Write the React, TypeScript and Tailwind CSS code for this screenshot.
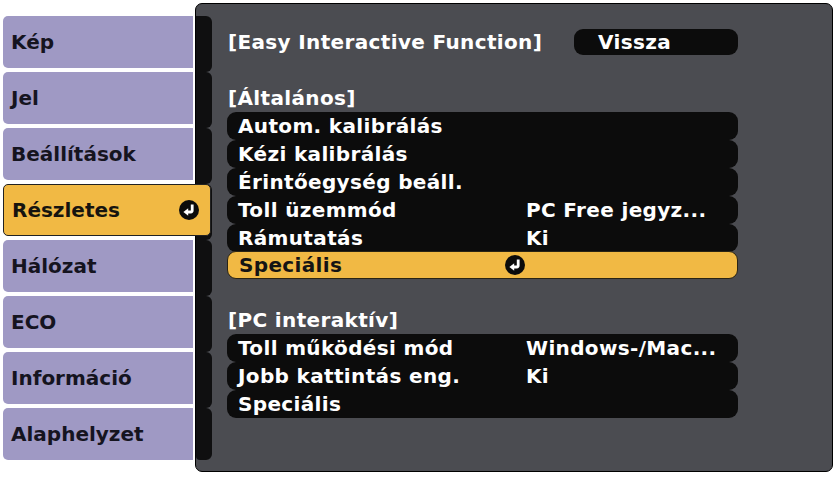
import React from "react";

const TABS = ["Kép", "Jel", "Beállítások", "Részletes", "Hálózat", "ECO", "Információ", "Alaphelyzet"];
const ACTIVE_TAB = "Részletes";

type Row = { label: string; value?: string; selected?: boolean };

const GENERAL: Row[] = [
  { label: "Autom. kalibrálás" },
  { label: "Kézi kalibrálás" },
  { label: "Érintőegység beáll." },
  { label: "Toll üzemmód", value: "PC Free jegyz..." },
  { label: "Rámutatás", value: "Ki" },
  { label: "Speciális", selected: true },
];

const PC_INTERACTIVE: Row[] = [
  { label: "Toll működési mód", value: "Windows-/Mac..." },
  { label: "Jobb kattintás eng.", value: "Ki" },
  { label: "Speciális" },
];

function EnterIcon() {
  return (
    <svg width="20" height="20" viewBox="0 0 20 20" className="shrink-0">
      <circle cx="10" cy="10" r="10" fill="#0b0b0b" />
      <path d="M13.2 4.6 V10.6 a1.4 1.4 0 0 1 -1.4 1.4 H8.2" fill="none" stroke="#fff" strokeWidth="2.8" />
      <polygon points="4.4,12 9.2,8.2 9.2,15.8" fill="#fff" />
    </svg>
  );
}

function MenuRow({ row }: { row: Row }) {
  return (
    <div
      className={
        row.selected
          ? "grid grid-cols-[266px_22px_1fr] items-center h-[28px] rounded-[9px] pl-[11px] bg-[#f1b944] text-[#141414] border border-[#2a2414] -my-px"
          : "grid grid-cols-[266px_22px_1fr] items-center h-[28px] rounded-[9px] pl-[11px] bg-[#0c0c0c] text-white"
      }
    >
      <span className="whitespace-nowrap">{row.label}</span>
      <span className="flex items-center">{row.selected && <EnterIcon />}</span>
      <span className="whitespace-nowrap">{row.value}</span>
    </div>
  );
}

export default function App() {
  return (
    <div
      className="w-[838px] h-[477px] bg-white flex items-start font-bold text-[20px] leading-none"
      style={{ fontFamily: '"DejaVu Sans", "Liberation Sans", sans-serif' }}
    >
      {/* left tabs */}
      <div className="relative z-10 flex flex-col gap-[4px] pt-[16px] pl-[3px] w-[192px]">
        {TABS.map((tab) =>
          tab === ACTIVE_TAB ? (
            <div
              key={tab}
              className="flex items-center justify-between h-[52px] w-[208px] pl-[8px] pr-[11px] rounded-[5px] bg-[#f1b944] border border-[#222] text-[#16140f]"
            >
              <span>{tab}</span>
              <EnterIcon />
            </div>
          ) : (
            <div
              key={tab}
              className="flex items-center h-[52px] w-[190px] pl-[8px] rounded-l-[5px] bg-[#9f99c4] text-[#15141f]"
            >
              {tab}
            </div>
          )
        )}
      </div>

      {/* main panel */}
      <div className="mt-[3px] ml-[3px] w-[638px] h-[469px] rounded-[7px] border border-black bg-[#4b4c51] flex">
        <div className="flex flex-col pt-[12px] w-[16px]">
          {TABS.map((tab, i) => (
            <div
              key={tab}
              className={
                i === TABS.length - 1
                  ? "h-[52px] rounded-r-[6px] rounded-bl-[4px] bg-[#0f0f10]"
                  : "h-[56px] rounded-r-[6px] bg-[#0f0f10]"
              }
            />
          ))}
        </div>

        <div className="flex flex-col pt-[24px] pl-[15px] w-[526px] text-white tracking-[0.35px]">
          <div className="flex items-center justify-between h-[28px]">
            <span className="pl-[1px] whitespace-nowrap">[Easy Interactive Function]</span>
            <span className="flex items-center h-[26px] w-[164px] rounded-[9px] bg-[#0c0c0c] pl-[24px]">Vissza</span>
          </div>

          <div className="h-[28px]" />
          <div className="flex items-center h-[28px] pl-[1px]">[Általános]</div>
          {GENERAL.map((row) => (
            <MenuRow key={row.label} row={row} />
          ))}

          <div className="h-[28px]" />
          <div className="flex items-center h-[28px] pl-[1px]">[PC interaktív]</div>
          {PC_INTERACTIVE.map((row) => (
            <MenuRow key={row.label} row={row} />
          ))}
        </div>
      </div>
    </div>
  );
}
